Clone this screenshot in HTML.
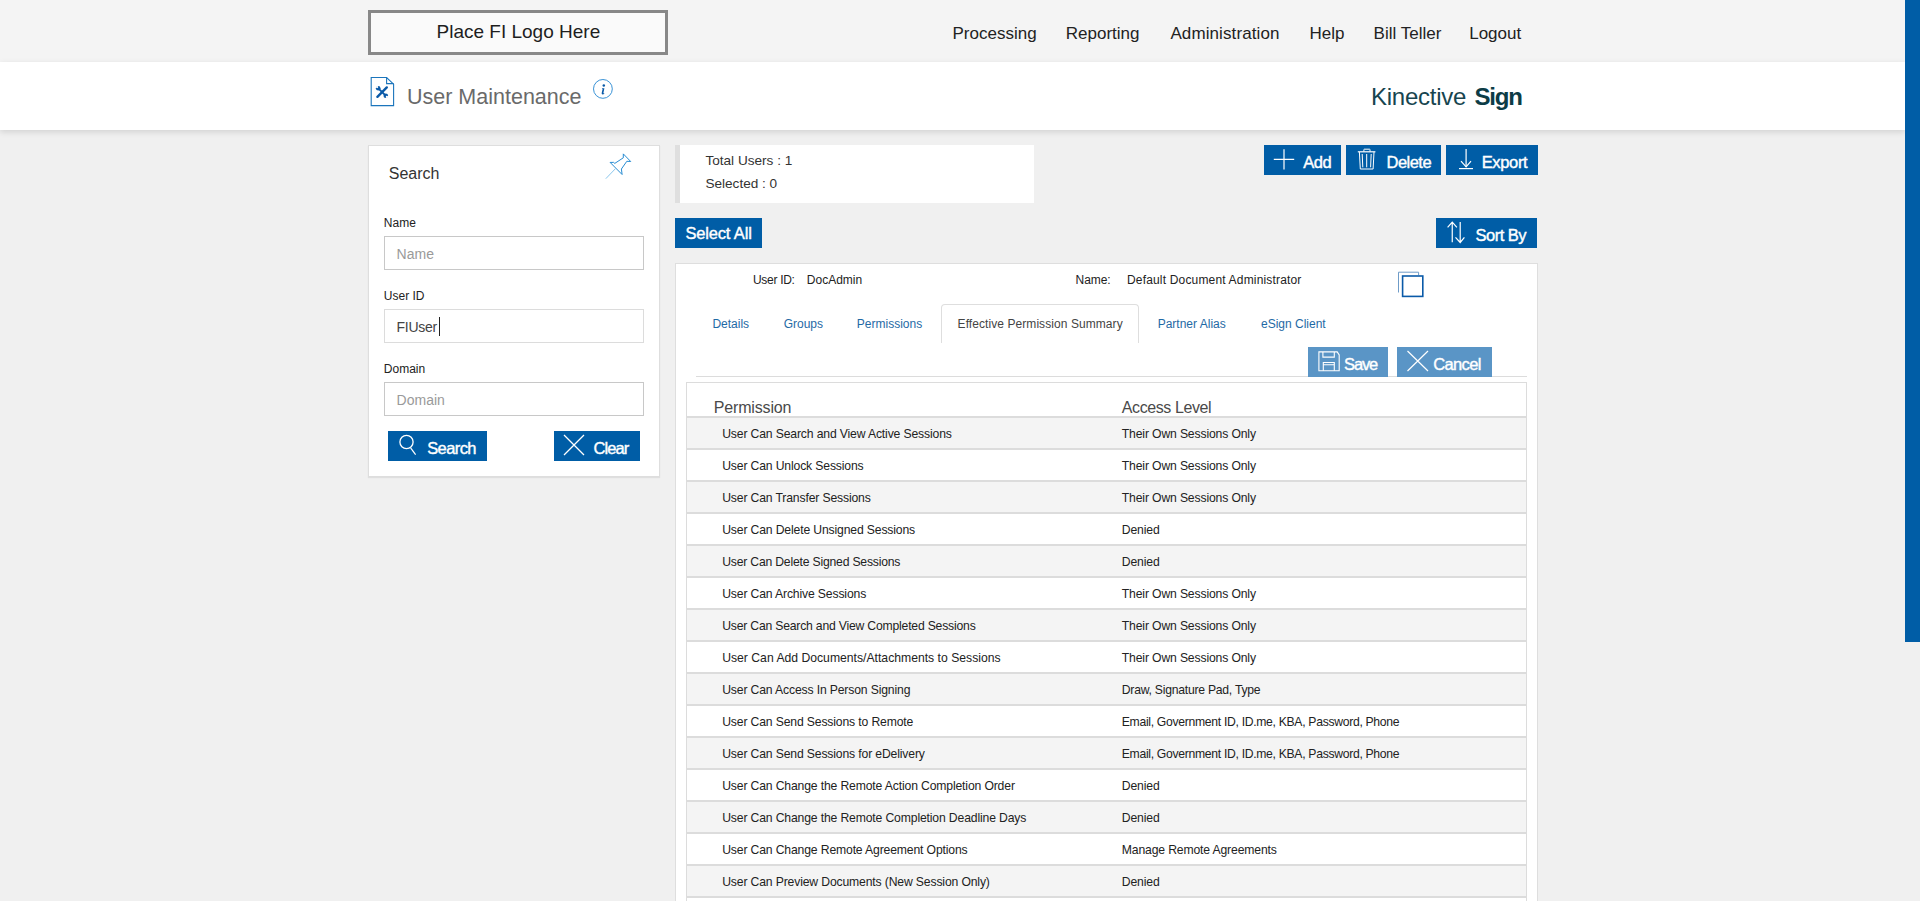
<!DOCTYPE html>
<html><head><meta charset="utf-8"><title>User Maintenance</title>
<style>
html,body{margin:0;padding:0;width:1920px;height:901px;overflow:hidden;background:#f0f0f0;font-family:"Liberation Sans",sans-serif;}
body>div,body>svg{position:absolute;}
.t{white-space:nowrap;}
</style></head><body>
<div style="left:0px;top:0px;width:1905px;height:62px;background:#f4f4f4"></div>
<div style="left:368px;top:10px;width:300px;height:45px;background:#fafafa;border:3px solid #888;box-sizing:border-box"></div>
<div class="t" style="left:436.50px;top:21.92px;font-size:19px;line-height:19px;color:#1e1e1e;font-weight:normal;letter-spacing:0px;">Place FI Logo Here</div>
<div class="t" style="left:952.50px;top:24.61px;font-size:17px;line-height:17px;color:#222;font-weight:normal;letter-spacing:0px;">Processing</div>
<div class="t" style="left:1065.80px;top:24.61px;font-size:17px;line-height:17px;color:#222;font-weight:normal;letter-spacing:0px;">Reporting</div>
<div class="t" style="left:1170.40px;top:24.61px;font-size:17px;line-height:17px;color:#222;font-weight:normal;letter-spacing:0.1px;">Administration</div>
<div class="t" style="left:1309.60px;top:24.61px;font-size:17px;line-height:17px;color:#222;font-weight:normal;letter-spacing:0px;">Help</div>
<div class="t" style="left:1373.60px;top:24.61px;font-size:17px;line-height:17px;color:#222;font-weight:normal;letter-spacing:0px;">Bill Teller</div>
<div class="t" style="left:1469.20px;top:24.61px;font-size:17px;line-height:17px;color:#222;font-weight:normal;letter-spacing:0px;">Logout</div>
<div style="left:0px;top:62px;width:1905px;height:68px;background:#fff;box-shadow:0 2px 6px rgba(0,0,0,0.13)"></div>
<svg style="left:369px;top:76px" width="27" height="32" viewBox="0 0 27 32">
<path d="M2.2 1.5 H17.6 L24.6 8.2 V29.6 H2.2 Z" fill="none" stroke="#1b75bc" stroke-width="1.1"/>
<path d="M17.6 1.5 V7.6 H24.6" fill="none" stroke="#1b75bc" stroke-width="1.1"/>
<path d="M17.8 11.4 L8.4 20.8" stroke="#0a5aa8" stroke-width="2.4" stroke-linecap="round"/>
<path d="M9.6 12.6 L16.4 19.4" stroke="#0a5aa8" stroke-width="1.9"/>
<circle cx="9.2" cy="12.2" r="2.3" fill="#0a5aa8"/><circle cx="8.1" cy="11.1" r="1.15" fill="#fff"/>
<circle cx="16.8" cy="19.8" r="2.3" fill="#0a5aa8"/><circle cx="17.9" cy="20.9" r="1.15" fill="#fff"/>
</svg>
<div class="t" style="left:407.00px;top:86.80px;font-size:21.5px;line-height:21.5px;color:#6a6a6a;font-weight:normal;letter-spacing:0px;">User Maintenance</div>
<svg style="left:590px;top:76px" width="26" height="26" viewBox="0 0 26 26">
<circle cx="12.9" cy="12.9" r="9.4" fill="none" stroke="#2185d0" stroke-width="0.9"/>
<circle cx="13.8" cy="9.4" r="1.25" fill="#0a5aa8"/><path d="M12.2 12.3 H14.4 L13.4 16.9 Q13.3 17.5 14.3 17.2 L14.2 17.9 Q13.2 18.6 12.1 18.3 Q11.5 18 11.7 17.1 L12.6 13.1 L11.9 13.1 Z" fill="#0a5aa8"/>
</svg>
<div class="t" style="left:1371.00px;top:84.68px;font-size:24px;line-height:24px;color:#17454f;font-weight:normal;letter-spacing:-0.25px;">Kinective</div>
<div class="t" style="left:1474.50px;top:84.68px;font-size:24px;line-height:24px;color:#0d3c46;font-weight:bold;letter-spacing:-1.2px;">Sign</div>
<div style="left:0px;top:130px;width:1905px;height:771px;background:#f0f0f0;z-index:-1"></div>
<div style="left:1905px;top:0px;width:15px;height:901px;background:#f0f0f0"></div>
<div style="left:1905px;top:0px;width:15px;height:642px;background:#005da6"></div>
<div style="left:368px;top:145px;width:292px;height:332px;background:#fff;border:1px solid #dedede;box-sizing:border-box;box-shadow:0 1px 1px rgba(0,0,0,0.07)"></div>
<div class="t" style="left:388.80px;top:166.46px;font-size:16px;line-height:16px;color:#333;font-weight:normal;letter-spacing:0px;">Search</div>
<svg style="left:600px;top:150px" width="36" height="34" viewBox="0 0 36 34">
<path d="M23.3 3.9 L30.7 11.5 L26.8 11.3 L21.4 19 L22.1 24.5 L10.1 12.4 L13.6 12.4 L14.8 13.4 L23.3 7.8 Z" fill="none" stroke="#1b86d0" stroke-width="0.95" stroke-linejoin="round"/>
<path d="M15.5 18.6 L5.8 28.7" stroke="#7cc0ea" stroke-width="0.9"/>
</svg>
<div class="t" style="left:383.80px;top:216.94px;font-size:12px;line-height:12px;color:#222;font-weight:normal;letter-spacing:0px;">Name</div>
<div style="left:384px;top:236px;width:260px;height:34px;background:#fff;border:1px solid #c8c8c8;box-sizing:border-box"></div>
<div class="t" style="left:396.60px;top:247.15px;font-size:14px;line-height:14px;color:#9a9a9a;font-weight:normal;letter-spacing:0px;">Name</div>
<div class="t" style="left:383.80px;top:290.34px;font-size:12px;line-height:12px;color:#222;font-weight:normal;letter-spacing:0px;">User ID</div>
<div style="left:384px;top:309px;width:260px;height:34px;background:#fff;border:1px solid #dcdcdc;box-sizing:border-box"></div>
<div class="t" style="left:396.60px;top:320.15px;font-size:14px;line-height:14px;color:#444;font-weight:normal;letter-spacing:-0.3px;">FIUser</div>
<div class="t" style="left:383.80px;top:363.04px;font-size:12px;line-height:12px;color:#222;font-weight:normal;letter-spacing:0px;">Domain</div>
<div style="left:384px;top:382px;width:260px;height:34px;background:#fff;border:1px solid #c8c8c8;box-sizing:border-box"></div>
<div class="t" style="left:396.60px;top:393.15px;font-size:14px;line-height:14px;color:#9a9a9a;font-weight:normal;letter-spacing:0px;">Domain</div>
<div style="left:439px;top:317px;width:1px;height:19px;background:#222"></div>
<div style="left:388px;top:431px;width:99px;height:30px;background:#005da6"></div>
<svg style="left:396px;top:432px" width="24" height="26" viewBox="0 0 24 26">
<circle cx="10.5" cy="10" r="6.6" fill="none" stroke="#fff" stroke-width="1.3"/>
<path d="M14.6 15.8 L19.6 22.6" stroke="#fff" stroke-width="1.2"/>
</svg>
<div class="t" style="left:427.20px;top:440.03px;font-size:16.5px;line-height:16.5px;color:#fff;font-weight:normal;letter-spacing:-0.6px;-webkit-text-stroke:0.4px #fff">Search</div>
<div style="left:554px;top:431px;width:86px;height:30px;background:#005da6"></div>
<svg style="left:562px;top:433px" width="24" height="24" viewBox="0 0 24 24">
<path d="M2 2 L22 22 M22 2 L2 22" stroke="#fff" stroke-width="1.3"/>
</svg>
<div class="t" style="left:593.60px;top:440.03px;font-size:16.5px;line-height:16.5px;color:#fff;font-weight:normal;letter-spacing:-0.97px;-webkit-text-stroke:0.4px #fff">Clear</div>
<div style="left:675px;top:145px;width:5px;height:58px;background:#dfdfdf"></div>
<div style="left:680px;top:145px;width:354px;height:58px;background:#fff"></div>
<div class="t" style="left:705.40px;top:153.69px;font-size:13.6px;line-height:13.6px;color:#333;font-weight:normal;letter-spacing:0px;">Total Users : 1</div>
<div class="t" style="left:705.40px;top:177.29px;font-size:13.6px;line-height:13.6px;color:#333;font-weight:normal;letter-spacing:0px;">Selected : 0</div>
<div style="left:675px;top:218px;width:87px;height:30px;background:#005da6"></div>
<div class="t" style="left:685.40px;top:225.03px;font-size:16.5px;line-height:16.5px;color:#fff;font-weight:normal;letter-spacing:-0.16px;-webkit-text-stroke:0.4px #fff">Select All</div>
<div style="left:1264px;top:145px;width:77px;height:30px;background:#005da6"></div>
<svg style="left:1272px;top:147px" width="24" height="24" viewBox="0 0 24 24">
<path d="M12 2.2 V22.5 M1.8 12.3 H22.2" stroke="#fff" stroke-width="1.2"/>
</svg>
<div class="t" style="left:1303.30px;top:154.03px;font-size:16.5px;line-height:16.5px;color:#fff;font-weight:normal;letter-spacing:-0.5px;-webkit-text-stroke:0.4px #fff">Add</div>
<div style="left:1346px;top:145px;width:95px;height:30px;background:#005da6"></div>
<svg style="left:1356px;top:147px" width="22" height="25" viewBox="0 0 22 25">
<path d="M1.8 4.8 H19.4" stroke="#fff" stroke-width="1.2"/>
<path d="M7.9 4.6 V2.6 Q7.9 2.2 8.3 2.2 H13.6 Q14 2.2 14 2.6 V4.6" fill="none" stroke="#fff" stroke-width="1"/>
<path d="M3.4 5 L4.3 22 H17.1 L18 5" fill="none" stroke="#fff" stroke-width="1"/>
<path d="M6.2 7 L6.8 20.3 M10.7 7 V20.3 M15.2 7 L14.6 20.3" stroke="#fff" stroke-width="1"/>
</svg>
<div class="t" style="left:1386.60px;top:153.73px;font-size:16.5px;line-height:16.5px;color:#fff;font-weight:normal;letter-spacing:-0.54px;-webkit-text-stroke:0.4px #fff">Delete</div>
<div style="left:1446px;top:145px;width:92px;height:30px;background:#005da6"></div>
<svg style="left:1456px;top:147px" width="20" height="25" viewBox="0 0 20 25">
<path d="M10.1 2 V20" stroke="#fff" stroke-width="1.2"/>
<path d="M5 14.2 L10.1 19.8 L15 14.2" fill="none" stroke="#fff" stroke-width="1.2"/>
<path d="M3 21.6 H17" stroke="#fff" stroke-width="1.2"/>
</svg>
<div class="t" style="left:1481.70px;top:154.03px;font-size:16.5px;line-height:16.5px;color:#fff;font-weight:normal;letter-spacing:-0.34px;-webkit-text-stroke:0.4px #fff">Export</div>
<div style="left:1436px;top:218px;width:101px;height:30px;background:#005da6"></div>
<svg style="left:1444px;top:219px" width="24" height="26" viewBox="0 0 24 26">
<path d="M8.25 3.2 V23.3 M3.6 8.4 L8.25 3.2 L12.9 8.4" fill="none" stroke="#fff" stroke-width="1.2"/>
<path d="M16.2 3 V23.3 M11.5 18.4 L16.2 23.5 L20.4 18.4" fill="none" stroke="#fff" stroke-width="1.2"/>
</svg>
<div class="t" style="left:1475.50px;top:227.03px;font-size:16.5px;line-height:16.5px;color:#fff;font-weight:normal;letter-spacing:-0.5px;-webkit-text-stroke:0.4px #fff">Sort By</div>
<div style="left:675px;top:263px;width:863px;height:700px;background:#fff;border:1px solid #dedede;box-sizing:border-box"></div>
<div class="t" style="left:753.00px;top:274.14px;font-size:12px;line-height:12px;color:#222;font-weight:normal;letter-spacing:-0.3px;">User ID:</div>
<div class="t" style="left:806.80px;top:274.14px;font-size:12px;line-height:12px;color:#222;font-weight:normal;letter-spacing:0px;">DocAdmin</div>
<div class="t" style="left:1075.60px;top:274.14px;font-size:12px;line-height:12px;color:#222;font-weight:normal;letter-spacing:-0.1px;">Name:</div>
<div class="t" style="left:1127.00px;top:274.14px;font-size:12px;line-height:12px;color:#222;font-weight:normal;letter-spacing:0.17px;">Default Document Administrator</div>
<svg style="left:1395px;top:268px" width="32" height="32" viewBox="0 0 32 32">
<path d="M3.5 24.5 V4.2 H23.6 V7" fill="none" stroke="#6f9cc8" stroke-width="1"/>
<rect x="7.6" y="8.0" width="20.2" height="20.4" fill="#fff" stroke="#0a5aa8" stroke-width="1.6"/>
</svg>
<div style="left:941px;top:304px;width:198px;height:39px;background:#fff;border:1px solid #dedede;border-bottom:none;border-radius:4px 4px 0 0;box-sizing:border-box"></div>
<div class="t" style="left:712.40px;top:318.14px;font-size:12px;line-height:12px;color:#1f6aa5;font-weight:normal;letter-spacing:0px;">Details</div>
<div class="t" style="left:783.70px;top:318.14px;font-size:12px;line-height:12px;color:#1f6aa5;font-weight:normal;letter-spacing:0px;">Groups</div>
<div class="t" style="left:856.80px;top:318.14px;font-size:12px;line-height:12px;color:#1f6aa5;font-weight:normal;letter-spacing:0px;">Permissions</div>
<div class="t" style="left:957.60px;top:318.14px;font-size:12px;line-height:12px;color:#444;font-weight:normal;letter-spacing:0.07px;">Effective Permission Summary</div>
<div class="t" style="left:1157.70px;top:318.14px;font-size:12px;line-height:12px;color:#1f6aa5;font-weight:normal;letter-spacing:0px;">Partner Alias</div>
<div class="t" style="left:1261.00px;top:318.14px;font-size:12px;line-height:12px;color:#1f6aa5;font-weight:normal;letter-spacing:0px;">eSign Client</div>
<div style="left:696px;top:376px;width:831px;height:1px;background:#dcdcdc"></div>
<div style="left:1308px;top:347px;width:80px;height:30px;background:#5a95c6"></div>
<svg style="left:1316px;top:349px" width="26" height="26" viewBox="0 0 26 26">
<path d="M2.9 2.9 H13.3 H21.2 L23.2 6 V21.7 H2.9 Z" fill="none" stroke="#fff" stroke-width="1.1"/>
<path d="M6.9 2.9 V8.1 H18.3 V2.9" fill="none" stroke="#fff" stroke-width="1.1"/>
<path d="M7.3 21.7 V13.5 H18.3 V21.7 M7.3 15.8 H18.3" fill="none" stroke="#fff" stroke-width="1.1"/>
</svg>
<div class="t" style="left:1344.10px;top:356.03px;font-size:16.5px;line-height:16.5px;color:#fff;font-weight:normal;letter-spacing:-1.2px;-webkit-text-stroke:0.4px #fff">Save</div>
<div style="left:1397px;top:347px;width:95px;height:30px;background:#5a95c6"></div>
<svg style="left:1405px;top:349px" width="26" height="25" viewBox="0 0 26 25">
<path d="M2.5 2 L23 22 M23 2 L2.5 22" stroke="#fff" stroke-width="1.2"/>
</svg>
<div class="t" style="left:1433.20px;top:356.03px;font-size:16.5px;line-height:16.5px;color:#fff;font-weight:normal;letter-spacing:-0.64px;-webkit-text-stroke:0.4px #fff">Cancel</div>
<div style="left:686px;top:382px;width:841px;height:600px;background:#fff;border:1px solid #dcdcdc;box-sizing:border-box"></div>
<div class="t" style="left:713.70px;top:400.46px;font-size:16px;line-height:16px;color:#4a4a4a;font-weight:normal;letter-spacing:-0.15px;">Permission</div>
<div class="t" style="left:1121.80px;top:400.46px;font-size:16px;line-height:16px;color:#4a4a4a;font-weight:normal;letter-spacing:-0.4px;">Access Level</div>
<div style="left:686px;top:416px;width:841px;height:2px;background:#dcdcdc"></div>
<div style="left:687px;top:418px;width:839px;height:30px;background:#f4f4f4"></div>
<div style="left:687px;top:448px;width:839px;height:2px;background:#dcdcdc"></div>
<div class="t" style="left:722.20px;top:427.97px;font-size:12.2px;line-height:12.2px;color:#222;font-weight:normal;letter-spacing:-0.15px;">User Can Search and View Active Sessions</div>
<div class="t" style="left:1121.80px;top:427.97px;font-size:12.2px;line-height:12.2px;color:#222;font-weight:normal;letter-spacing:-0.15px;">Their Own Sessions Only</div>
<div style="left:687px;top:450px;width:839px;height:30px;background:#fff"></div>
<div style="left:687px;top:480px;width:839px;height:2px;background:#dcdcdc"></div>
<div class="t" style="left:722.20px;top:459.97px;font-size:12.2px;line-height:12.2px;color:#222;font-weight:normal;letter-spacing:-0.15px;">User Can Unlock Sessions</div>
<div class="t" style="left:1121.80px;top:459.97px;font-size:12.2px;line-height:12.2px;color:#222;font-weight:normal;letter-spacing:-0.15px;">Their Own Sessions Only</div>
<div style="left:687px;top:482px;width:839px;height:30px;background:#f4f4f4"></div>
<div style="left:687px;top:512px;width:839px;height:2px;background:#dcdcdc"></div>
<div class="t" style="left:722.20px;top:491.97px;font-size:12.2px;line-height:12.2px;color:#222;font-weight:normal;letter-spacing:-0.15px;">User Can Transfer Sessions</div>
<div class="t" style="left:1121.80px;top:491.97px;font-size:12.2px;line-height:12.2px;color:#222;font-weight:normal;letter-spacing:-0.15px;">Their Own Sessions Only</div>
<div style="left:687px;top:514px;width:839px;height:30px;background:#fff"></div>
<div style="left:687px;top:544px;width:839px;height:2px;background:#dcdcdc"></div>
<div class="t" style="left:722.20px;top:523.97px;font-size:12.2px;line-height:12.2px;color:#222;font-weight:normal;letter-spacing:-0.15px;">User Can Delete Unsigned Sessions</div>
<div class="t" style="left:1121.80px;top:523.97px;font-size:12.2px;line-height:12.2px;color:#222;font-weight:normal;letter-spacing:-0.15px;">Denied</div>
<div style="left:687px;top:546px;width:839px;height:30px;background:#f4f4f4"></div>
<div style="left:687px;top:576px;width:839px;height:2px;background:#dcdcdc"></div>
<div class="t" style="left:722.20px;top:555.97px;font-size:12.2px;line-height:12.2px;color:#222;font-weight:normal;letter-spacing:-0.2px;">User Can Delete Signed Sessions</div>
<div class="t" style="left:1121.80px;top:555.97px;font-size:12.2px;line-height:12.2px;color:#222;font-weight:normal;letter-spacing:-0.15px;">Denied</div>
<div style="left:687px;top:578px;width:839px;height:30px;background:#fff"></div>
<div style="left:687px;top:608px;width:839px;height:2px;background:#dcdcdc"></div>
<div class="t" style="left:722.20px;top:587.97px;font-size:12.2px;line-height:12.2px;color:#222;font-weight:normal;letter-spacing:-0.15px;">User Can Archive Sessions</div>
<div class="t" style="left:1121.80px;top:587.97px;font-size:12.2px;line-height:12.2px;color:#222;font-weight:normal;letter-spacing:-0.15px;">Their Own Sessions Only</div>
<div style="left:687px;top:610px;width:839px;height:30px;background:#f4f4f4"></div>
<div style="left:687px;top:640px;width:839px;height:2px;background:#dcdcdc"></div>
<div class="t" style="left:722.20px;top:619.97px;font-size:12.2px;line-height:12.2px;color:#222;font-weight:normal;letter-spacing:-0.2px;">User Can Search and View Completed Sessions</div>
<div class="t" style="left:1121.80px;top:619.97px;font-size:12.2px;line-height:12.2px;color:#222;font-weight:normal;letter-spacing:-0.15px;">Their Own Sessions Only</div>
<div style="left:687px;top:642px;width:839px;height:30px;background:#fff"></div>
<div style="left:687px;top:672px;width:839px;height:2px;background:#dcdcdc"></div>
<div class="t" style="left:722.20px;top:651.97px;font-size:12.2px;line-height:12.2px;color:#222;font-weight:normal;letter-spacing:0.0px;">User Can Add Documents/Attachments to Sessions</div>
<div class="t" style="left:1121.80px;top:651.97px;font-size:12.2px;line-height:12.2px;color:#222;font-weight:normal;letter-spacing:-0.15px;">Their Own Sessions Only</div>
<div style="left:687px;top:674px;width:839px;height:30px;background:#f4f4f4"></div>
<div style="left:687px;top:704px;width:839px;height:2px;background:#dcdcdc"></div>
<div class="t" style="left:722.20px;top:683.97px;font-size:12.2px;line-height:12.2px;color:#222;font-weight:normal;letter-spacing:-0.15px;">User Can Access In Person Signing</div>
<div class="t" style="left:1121.80px;top:683.97px;font-size:12.2px;line-height:12.2px;color:#222;font-weight:normal;letter-spacing:-0.25px;">Draw, Signature Pad, Type</div>
<div style="left:687px;top:706px;width:839px;height:30px;background:#fff"></div>
<div style="left:687px;top:736px;width:839px;height:2px;background:#dcdcdc"></div>
<div class="t" style="left:722.20px;top:715.97px;font-size:12.2px;line-height:12.2px;color:#222;font-weight:normal;letter-spacing:-0.15px;">User Can Send Sessions to Remote</div>
<div class="t" style="left:1121.80px;top:715.97px;font-size:12.2px;line-height:12.2px;color:#222;font-weight:normal;letter-spacing:-0.31px;">Email, Government ID, ID.me, KBA, Password, Phone</div>
<div style="left:687px;top:738px;width:839px;height:30px;background:#f4f4f4"></div>
<div style="left:687px;top:768px;width:839px;height:2px;background:#dcdcdc"></div>
<div class="t" style="left:722.20px;top:747.97px;font-size:12.2px;line-height:12.2px;color:#222;font-weight:normal;letter-spacing:-0.15px;">User Can Send Sessions for eDelivery</div>
<div class="t" style="left:1121.80px;top:747.97px;font-size:12.2px;line-height:12.2px;color:#222;font-weight:normal;letter-spacing:-0.31px;">Email, Government ID, ID.me, KBA, Password, Phone</div>
<div style="left:687px;top:770px;width:839px;height:30px;background:#fff"></div>
<div style="left:687px;top:800px;width:839px;height:2px;background:#dcdcdc"></div>
<div class="t" style="left:722.20px;top:779.97px;font-size:12.2px;line-height:12.2px;color:#222;font-weight:normal;letter-spacing:-0.15px;">User Can Change the Remote Action Completion Order</div>
<div class="t" style="left:1121.80px;top:779.97px;font-size:12.2px;line-height:12.2px;color:#222;font-weight:normal;letter-spacing:-0.15px;">Denied</div>
<div style="left:687px;top:802px;width:839px;height:30px;background:#f4f4f4"></div>
<div style="left:687px;top:832px;width:839px;height:2px;background:#dcdcdc"></div>
<div class="t" style="left:722.20px;top:811.97px;font-size:12.2px;line-height:12.2px;color:#222;font-weight:normal;letter-spacing:-0.15px;">User Can Change the Remote Completion Deadline Days</div>
<div class="t" style="left:1121.80px;top:811.97px;font-size:12.2px;line-height:12.2px;color:#222;font-weight:normal;letter-spacing:-0.15px;">Denied</div>
<div style="left:687px;top:834px;width:839px;height:30px;background:#fff"></div>
<div style="left:687px;top:864px;width:839px;height:2px;background:#dcdcdc"></div>
<div class="t" style="left:722.20px;top:843.97px;font-size:12.2px;line-height:12.2px;color:#222;font-weight:normal;letter-spacing:-0.15px;">User Can Change Remote Agreement Options</div>
<div class="t" style="left:1121.80px;top:843.97px;font-size:12.2px;line-height:12.2px;color:#222;font-weight:normal;letter-spacing:-0.15px;">Manage Remote Agreements</div>
<div style="left:687px;top:866px;width:839px;height:30px;background:#f4f4f4"></div>
<div style="left:687px;top:896px;width:839px;height:2px;background:#dcdcdc"></div>
<div class="t" style="left:722.20px;top:875.97px;font-size:12.2px;line-height:12.2px;color:#222;font-weight:normal;letter-spacing:-0.15px;">User Can Preview Documents (New Session Only)</div>
<div class="t" style="left:1121.80px;top:875.97px;font-size:12.2px;line-height:12.2px;color:#222;font-weight:normal;letter-spacing:-0.15px;">Denied</div>
<div style="left:687px;top:898px;width:839px;height:30px;background:#fff"></div>
<div style="left:687px;top:928px;width:839px;height:2px;background:#dcdcdc"></div>
<div class="t" style="left:722.20px;top:907.97px;font-size:12.2px;line-height:12.2px;color:#222;font-weight:normal;letter-spacing:-0.15px;">User Can Manage Templates</div>
<div class="t" style="left:1121.80px;top:907.97px;font-size:12.2px;line-height:12.2px;color:#222;font-weight:normal;letter-spacing:-0.15px;">Denied</div>
</body></html>
